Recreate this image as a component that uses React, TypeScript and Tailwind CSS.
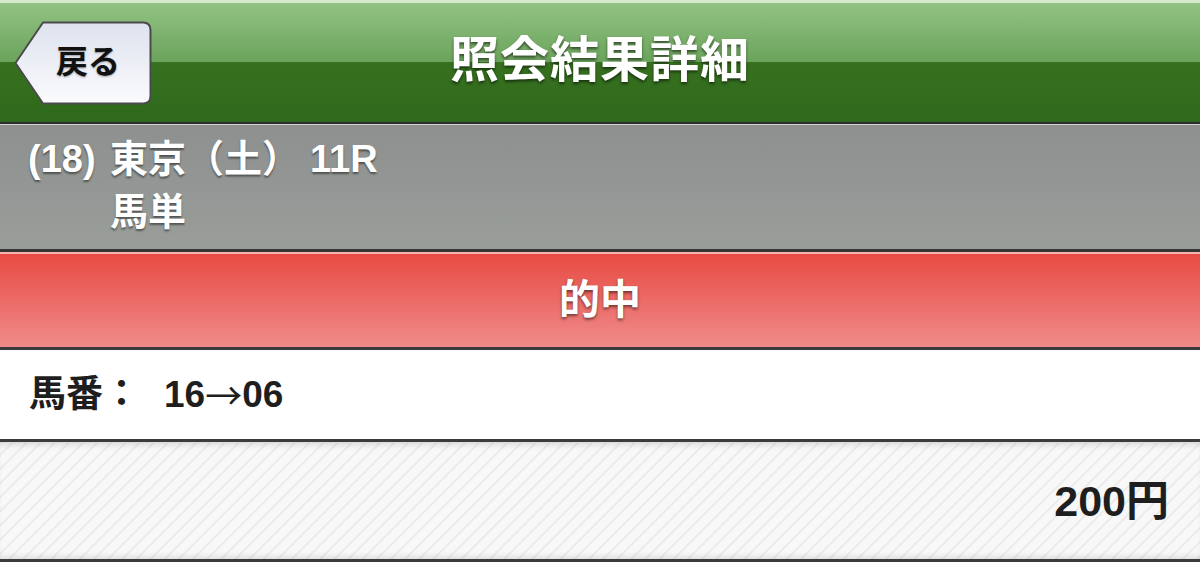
import React from "react";

const FONT = "font-['Liberation_Sans','Noto_Sans_CJK_JP',sans-serif]";

function BackButton() {
  return (
    <div className="relative ml-[14px] h-[84px] w-[138px]">
      <svg className="absolute inset-0" width="138" height="84" viewBox="0 0 138 84">
        <defs>
          <linearGradient id="backFill" x1="0" y1="0" x2="0" y2="1">
            <stop offset="0" stopColor="#dde2ee" />
            <stop offset="1" stopColor="#fbfbfd" />
          </linearGradient>
        </defs>
        <path
          d="M1.5 42 L29 1.5 H129 Q136.5 1.5 136.5 9 V75 Q136.5 82.5 129 82.5 H29 Z"
          fill="url(#backFill)"
          stroke="#4b4b4b"
          strokeWidth="2"
          strokeLinejoin="round"
        />
      </svg>
      <div className="relative flex h-full items-center justify-center pl-[10px] pb-[2px]">
        <span className="text-[32px] font-bold leading-none text-[#111] [text-shadow:0_1px_2px_rgba(0,0,0,0.35)]">
          戻る
        </span>
      </div>
    </div>
  );
}

export default function App() {
  return (
    <div className={`${FONT} w-[1200px] min-h-[577px] bg-white`}>
      {/* navigation bar */}
      <div className="grid h-[122px] grid-cols-[1fr_auto_1fr] items-center border-t-[3px] border-[#d6ebcc] bg-[linear-gradient(to_bottom,#93c284_0%,#6aa35b_50%,#37711f_50%,#2e691c_100%)]">
        <div className="flex items-center">
          <BackButton />
        </div>
        <h1 className="pb-[4px] text-[49px] font-bold leading-none tracking-[1px] text-white [text-shadow:0_2px_3px_rgba(0,0,0,0.55)]">
          照会結果詳細
        </h1>
        <div />
      </div>
      <div className="h-[2px] bg-[#2e2e2e]" />
      <div className="h-[1px] bg-[#cfd3cf]" />

      {/* race info */}
      <div className="flex h-[124px] bg-[linear-gradient(to_bottom,#8d908e,#9a9e9b)] pl-[28px] pt-[8px] text-[38px] font-bold leading-[53px] text-white [text-shadow:0_2px_2px_rgba(0,0,0,0.45)]">
        <div className="w-[82px]">(18)</div>
        <div className="flex flex-col">
          <div>
            東京（土）<span className="ml-[10px]">11R</span>
          </div>
          <div>馬単</div>
        </div>
      </div>
      <div className="h-[3px] bg-[#333531]" />
      <div className="h-[2px] bg-[#f4b3ad]" />

      {/* result banner */}
      <div className="flex h-[93px] items-center justify-center bg-[linear-gradient(to_bottom,#e84b43,#ef8b8a)]">
        <span className="text-[41px] font-bold leading-none text-white [text-shadow:0_2px_3px_rgba(0,0,0,0.5)]">
          的中
        </span>
      </div>
      <div className="h-[3px] bg-[#3a3a3a]" />

      {/* horse numbers */}
      <div className="flex h-[89px] items-center bg-white pl-[29px] text-[37px] font-bold leading-none text-[#1e1e1e]">
        <span>馬番：</span>
        <span className="ml-[24px] flex items-center">
          16
          <span className="font-['Noto_Sans_CJK_JP',sans-serif] font-normal">→</span>
          06
        </span>
      </div>
      <div className="h-[3px] bg-[#3b3b3b]" />
      <div className="h-[1px] bg-[#dcdcdc]" />

      {/* amount */}
      <div className="flex h-[116px] items-center justify-end bg-[repeating-linear-gradient(135deg,#f8f8f8_0px,#f8f8f8_7px,#ebebeb_8px,#ebebeb_9px,#f8f8f8_10px)] pr-[31px] shadow-[inset_0_6px_6px_-4px_rgba(0,0,0,0.12),inset_0_-6px_6px_-4px_rgba(0,0,0,0.12)]">
        <span className="text-[43px] font-bold leading-none text-[#1e1e1e]">200円</span>
      </div>
      <div className="h-[3px] bg-[#3b3b3b]" />
    </div>
  );
}
